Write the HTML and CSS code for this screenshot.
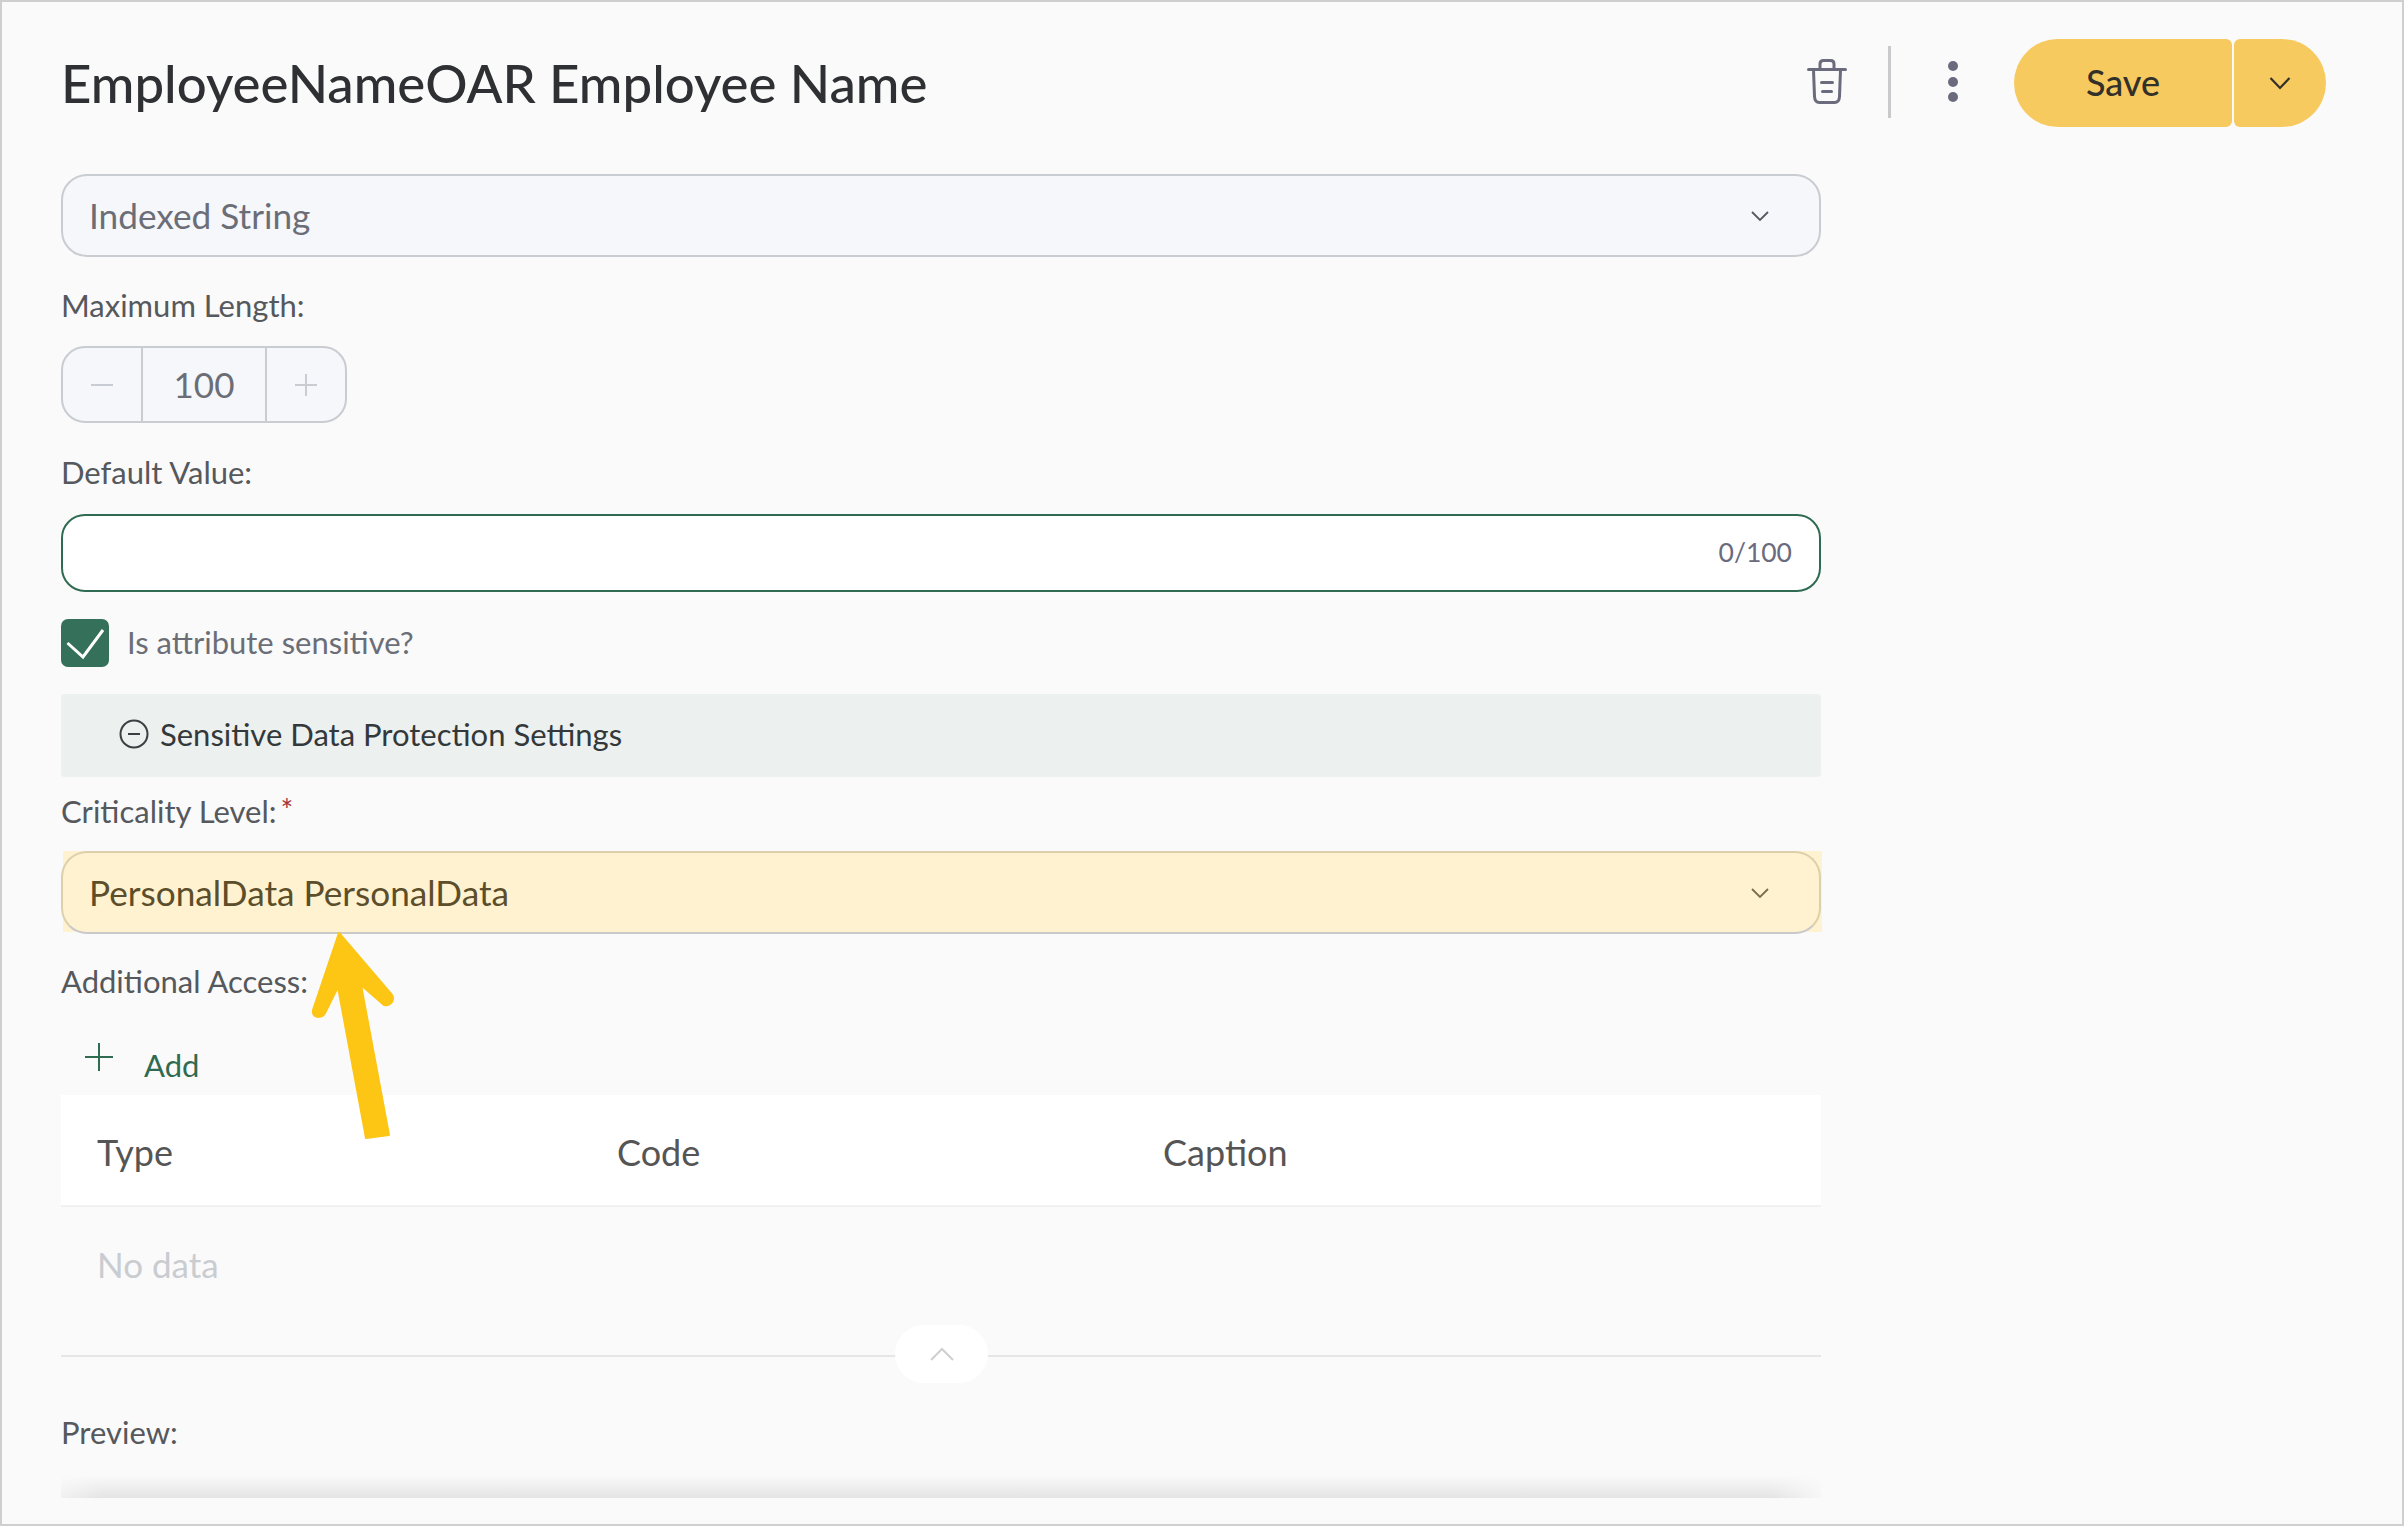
FILE: index.html
```html
<!DOCTYPE html>
<html lang="en">
<head>
    <meta charset="UTF-8">
    <title>EmployeeNameOAR Employee Name</title>
    <link rel="stylesheet" href="styles.css">
</head>
<body>
    <div class="page">
        <header class="header">
            <h1 class="title">EmployeeNameOAR Employee Name</h1>
            <div class="actions">
                <svg class="icon-trash" width="40" height="45" viewBox="0 0 40 45" fill="none" stroke="#6a6b7c" stroke-width="3" stroke-linecap="round" stroke-linejoin="round">
                    <path d="M1.500 10.500h37"/>
                    <path d="M13 9V5Q13 1.500 16.500 1.500h7Q27 1.500 27 5V9"/>
                    <path d="M6.500 11l1 26.500q.3 6 5 6h15q4.700 0 5-6l1-26.500"/>
                    <path d="M14.500 23.500h11M15.500 32.500h9"/>
                </svg>
                <span class="divider"></span>
                <span class="dots"><i></i><i></i><i></i></span>
                <div class="save-group">
                    <button class="btn-save">Save</button>
                    <button class="btn-caret">
                        <svg width="22" height="14" viewBox="0 0 22 14" fill="none" stroke="#33302a" stroke-width="2.200"><path d="M1.500 2l9.500 10 9.500-10"/></svg>
                    </button>
                </div>
            </div>
        </header>

        <div class="form">
            <div class="select select-type">
                <span class="select-text">Indexed String</span>
                <svg class="chevron" width="18" height="12" viewBox="0 0 18 12" fill="none" stroke="#55585e" stroke-width="1.800"><path d="M1 2l8 8 8-8"/></svg>
            </div>

            <label class="field-label label-length">Maximum Length:</label>
            <div class="stepper">
                <span class="step">
                    <svg width="24" height="24" viewBox="0 0 24 24" stroke="#c9ccd2" stroke-width="2"><path d="M1 12h22"/></svg>
                </span>
                <span class="step-value">100</span>
                <span class="step">
                    <svg width="24" height="24" viewBox="0 0 24 24" stroke="#c9ccd2" stroke-width="2"><path d="M1 12h22M12 1v22"/></svg>
                </span>
            </div>

            <label class="field-label label-default">Default Value:</label>
            <div class="text-input"><span class="counter">0/100</span></div>

            <div class="check-row">
                <span class="checkbox">
                    <svg width="38" height="36" viewBox="0 0 38 36" fill="none" stroke="#fff" stroke-width="3"><path d="M1.500 18L17 32 37 5"/></svg>
                </span>
                <span class="check-label">Is attribute sensitive?</span>
            </div>

            <div class="section-bar">
                <svg width="30" height="30" viewBox="0 0 30 30" fill="none" stroke="#3a3f42" stroke-width="2"><circle cx="15" cy="15" r="13.500"/><path d="M9 15h12"/></svg>
                <span>Sensitive Data Protection Settings</span>
            </div>

            <label class="field-label label-level">Criticality Level:<span class="required">*</span></label>
            <div class="level-wrap">
                <div class="select select-level">
                    <span class="select-text">PersonalData PersonalData</span>
                    <svg class="chevron" width="18" height="12" viewBox="0 0 18 12" fill="none" stroke="#7c6d48" stroke-width="1.800"><path d="M1 2l8 8 8-8"/></svg>
                </div>
            </div>

            <label class="field-label label-access">Additional Access:</label>
            <div class="add-row">
                <svg width="28" height="28" viewBox="0 0 28 28" stroke="#2f6b50" stroke-width="2"><path d="M0 14h28M14 0v28"/></svg>
                <span>Add</span>
            </div>

            <div class="table-head">
                <span class="col-type">Type</span>
                <span class="col-code">Code</span>
                <span class="col-caption">Caption</span>
            </div>
            <div class="table-empty">No data</div>

            <div class="collapse-line">
                <span class="collapse-btn">
                    <svg width="26" height="16" viewBox="0 0 26 16" fill="none" stroke="#cfcfcf" stroke-width="2"><path d="M2 14L13 3l11 11"/></svg>
                </span>
            </div>

            <label class="field-label label-preview">Preview:</label>
            <div class="preview-bar"></div>
        </div>

        <svg class="arrow" width="100" height="220" viewBox="300 925 100 220">
            <path fill="#fdc514" stroke="#fdc514" stroke-width="2" stroke-linejoin="round" d="M339 933L313 1010Q312 1016 318 1017Q323 1017 325 1013L338 987L366 1138L389 1135L361 985L384 1005Q389 1006 392 1002Q394 998 392 995Z"/>
        </svg>
    </div>
</body>
</html>
```

FILE: styles.css
```css
* {
    margin: 0;
    padding: 0;
    box-sizing: border-box;
}

body {
    background: #fafafa;
    font-family: 'Lato', 'Noto Sans', sans-serif;
    color: #55585c;
}

.page {
    position: relative;
    width: 2404px;
    height: 1526px;
    border: 2px solid #cfcfcf;
    background: #fafafa;
    padding: 37px 76px 0 59px;
    overflow: hidden;
}

/* header */
.header {
    display: flex;
    align-items: center;
    justify-content: space-between;
    height: 88px;
}

.title {
    margin-top: -2px;
    font-size: 52.800px;
    font-weight: 500;
    color: #2f3033;
}

.actions {
    display: flex;
    align-items: center;
}

.icon-trash {
    margin-top: -3px;
}

.divider {
    width: 3px;
    height: 72px;
    background: #c9c9cc;
    margin: -2px 57px 0 41px;
}

.dots {
    display: flex;
    flex-direction: column;
    gap: 5.500px;
    margin: -3px 56px 0 0;
}

.dots i {
    display: block;
    width: 10px;
    height: 10px;
    border-radius: 50%;
    background: #6a6b7c;
}

.save-group {
    display: flex;
    gap: 2px;
}

.btn-save,
.btn-caret {
    height: 88px;
    border: none;
    background: #f7ca60;
    color: #33302a;
    font-family: inherit;
}

.btn-save {
    width: 218px;
    padding-bottom: 2px;
    border-radius: 44px 6px 6px 44px;
    font-size: 36px;
    font-weight: 500;
}

.btn-caret {
    width: 92px;
    border-radius: 6px 44px 44px 6px;
    display: flex;
    align-items: center;
    justify-content: center;
}

/* form */
.form {
    width: 1760px;
    padding-top: 47px;
}

.select {
    display: flex;
    align-items: center;
    justify-content: space-between;
    height: 83px;
    border-radius: 26px;
    padding: 0 50px 0 26px;
    font-size: 35.200px;
}

.select-text {
    margin-top: -2px;
}

.select-type {
    background: #f5f7fb;
    border: 2px solid #c9ccd0;
    color: #6b6e76;
}

/* square highlight sits behind the rounded field */
.level-wrap {
    height: 81px;
    margin: 20px -1px 0 2px;
    background: #fff2d0;
}

.select-level {
    margin: 0 1px 0 -2px;
    background: #fff2d0;
    border: 2px solid #dcd0ac;
    border-bottom-color: #c9c9c9;
    color: #5c4e2a;
}

.field-label {
    display: block;
    height: 40px;
    line-height: 40px;
    font-size: 31px;
}

.label-length { margin-top: 28px; }
.label-default { margin-top: 29px; }
.label-level { margin-top: 14px; }
.label-access { margin-top: 29px; }
.label-preview { margin-top: 55px; }

.required {
    color: #a8323a;
    margin-left: 4px;
    vertical-align: 2px;
    line-height: 0;
    font-size: 30px;
}

.stepper {
    display: flex;
    width: 286px;
    height: 77px;
    margin-top: 21px;
    background: #f5f7fb;
    border: 2px solid #c9ccd0;
    border-radius: 24px;
}

.step {
    flex: 1;
    display: flex;
    align-items: center;
    justify-content: center;
}

.step-value {
    width: 126px;
    padding-bottom: 2px;
    border-left: 2px solid #c9ccd0;
    border-right: 2px solid #c9ccd0;
    display: flex;
    align-items: center;
    justify-content: center;
    font-size: 35px;
    color: #6b6e76;
}

.text-input {
    display: flex;
    align-items: center;
    justify-content: flex-end;
    height: 78px;
    margin-top: 22px;
    padding: 0 27px 2px 0;
    background: #fff;
    border: 2px solid #2f6b52;
    border-radius: 24px;
}

.counter {
    font-size: 26.500px;
    color: #6a6b7c;
}

.check-row {
    display: flex;
    align-items: center;
    gap: 18px;
    margin-top: 27px;
    height: 48px;
}

.checkbox {
    display: flex;
    align-items: center;
    justify-content: center;
    width: 48px;
    height: 48px;
    border-radius: 7px;
    background: #35705a;
}

.check-label {
    margin-top: -2px;
    font-size: 31px;
    color: #6b6e76;
}

.section-bar {
    display: flex;
    align-items: center;
    gap: 11px;
    height: 83px;
    margin-top: 27px;
    padding: 0 0 3px 58px;
    background: #ecf0ef;
    border-radius: 4px;
    font-size: 31px;
    color: #33383a;
}

.add-row {
    display: flex;
    height: 57px;
    margin-top: 37px;
    padding-left: 24px;
    gap: 31px;
    color: #2f6b50;
    font-size: 31px;
}

.add-row svg {
    margin-top: 5px;
}

.add-row span {
    margin-top: 8px;
}

.table-head {
    display: flex;
    align-items: center;
    height: 112px;
    padding-top: 3px;
    background: #fff;
    border-bottom: 2px solid #f1f1f1;
    font-size: 36px;
    color: #555;
}

.col-type { width: 556px; padding-left: 36px; }
.col-code { width: 546px; }

.table-empty {
    height: 120px;
    padding: 37px 0 0 36px;
    line-height: 40px;
    font-size: 35px;
    color: #c9ccd0;
}

.collapse-line {
    position: relative;
    height: 2px;
    margin-top: 28px;
    background: #e6e6e6;
}

.collapse-btn {
    position: absolute;
    left: 834px;
    top: -30px;
    display: flex;
    align-items: center;
    justify-content: center;
    width: 93px;
    height: 58px;
    border-radius: 29px;
    background: #fff;
}

.preview-bar {
    height: 23px;
    margin-top: 23px;
    background:
        linear-gradient(90deg, rgba(250, 250, 250, .6), transparent 40px, transparent calc(100% - 50px), rgba(250, 250, 250, .85)),
        linear-gradient(#fafafa, #e4e4e4);
}

.arrow {
    position: absolute;
    left: 298px;
    top: 923px;
}
```
